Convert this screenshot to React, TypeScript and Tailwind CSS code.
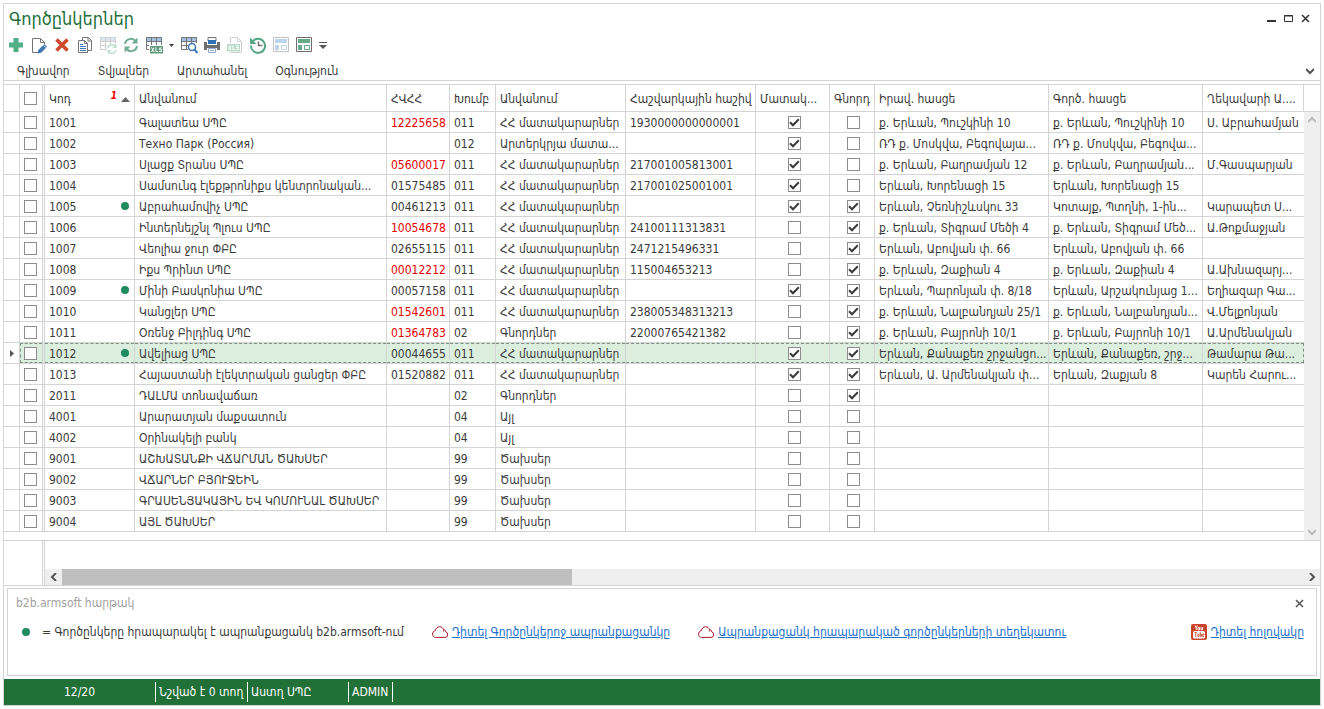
import { useState } from 'react';
import type { ReactNode } from 'react';

interface Partner {
  code: string;
  name: string;
  tin: string;
  group: string;
  groupName: string;
  account: string;
  supplier: boolean;
  buyer: boolean;
  legal: string;
  office: string;
  head: string;
  invalidTin?: boolean;
  published?: boolean;
}

const SUPPLIERS = 'ՀՀ մատակարարներ';
const BUYERS = 'Գնորդներ';
const OTHER = 'Այլ';
const COSTS = 'Ծախսեր';

const PARTNERS: Partner[] = [
  { code: '1001', name: 'Գալատեա ՍՊԸ', tin: '12225658', invalidTin: true, group: '011', groupName: SUPPLIERS, account: '1930000000000001', supplier: true, buyer: false, legal: 'ք. Երևան, Պուշկինի 10', office: 'ք. Երևան, Պուշկինի 10', head: 'Ս. Աբրահամյան' },
  { code: '1002', name: 'Техно Парк (Россия)', tin: '', group: '012', groupName: 'Արտերկրյա մատա...', account: '', supplier: true, buyer: false, legal: 'ՌԴ ք. Մոսկվա, Բեգովայա...', office: 'ՌԴ ք. Մոսկվա, Բեգովա...', head: '' },
  { code: '1003', name: 'Սլացք Տրանս ՍՊԸ', tin: '05600017', invalidTin: true, group: '011', groupName: SUPPLIERS, account: '217001005813001', supplier: true, buyer: false, legal: 'ք. Երևան, Բաղրամյան 12', office: 'ք. Երևան, Բաղրամյան...', head: 'Մ.Գասպարյան' },
  { code: '1004', name: 'Սամսունգ էլեքթրոնիքս կենտրոնական...', tin: '01575485', group: '011', groupName: SUPPLIERS, account: '217001025001001', supplier: true, buyer: false, legal: 'Երևան, Խորենացի 15', office: 'Երևան, Խորենացի 15', head: '' },
  { code: '1005', name: 'Աբրահամովիչ ՍՊԸ', published: true, tin: '00461213', group: '011', groupName: SUPPLIERS, account: '', supplier: true, buyer: true, legal: 'Երևան, Չեռնիշևսկու 33', office: 'Կոտայք, Պտղնի, 1-ին...', head: 'Կարապետ Ս...' },
  { code: '1006', name: 'Ինտերնեյշնլ Պլուս ՍՊԸ', tin: '10054678', invalidTin: true, group: '011', groupName: SUPPLIERS, account: '24100111313831', supplier: false, buyer: true, legal: 'ք. Երևան, Տիգրամ Մեծի 4', office: 'ք. Երևան, Տիգրամ Մեծ...', head: 'Ա.Թոքմաջյան' },
  { code: '1007', name: 'Վեոլիա ջուր ՓԲԸ', tin: '02655115', group: '011', groupName: SUPPLIERS, account: '2471215496331', supplier: false, buyer: true, legal: 'Երևան, Աբովյան փ. 66', office: 'Երևան, Աբովյան փ. 66', head: '' },
  { code: '1008', name: 'Իքս Պրինտ ՍՊԸ', tin: '00012212', invalidTin: true, group: '011', groupName: SUPPLIERS, account: '115004653213', supplier: false, buyer: true, legal: 'ք. Երևան, Զաքիան 4', office: 'ք. Երևան, Զաքիան 4', head: 'Ա.Ախնազարյ...' },
  { code: '1009', name: 'Մինի Բասկոնիա ՍՊԸ', published: true, tin: '00057158', group: '011', groupName: SUPPLIERS, account: '', supplier: true, buyer: true, legal: 'Երևան, Պարոնյան փ. 8/18', office: 'Երևան, Արշակունյաց 1...', head: 'Եղիազար Գա...' },
  { code: '1010', name: 'Կանցլեր ՍՊԸ', tin: '01542601', invalidTin: true, group: '011', groupName: SUPPLIERS, account: '238005348313213', supplier: false, buyer: true, legal: 'ք. Երևան, Նալբանդյան 25/1', office: 'ք. Երևան, Նալբանդյան...', head: 'Վ.Մելքոնյան' },
  { code: '1011', name: 'Օռենջ Բիլդինգ ՍՊԸ', tin: '01364783', invalidTin: true, group: '02', groupName: BUYERS, account: '22000765421382', supplier: false, buyer: true, legal: 'ք. Երևան, Բայրոնի 10/1', office: 'ք. Երևան, Բայրոնի 10/1', head: 'Ա.Արմենակյան' },
  { code: '1012', name: 'Ավելիաց ՍՊԸ', published: true, tin: '00044655', group: '011', groupName: SUPPLIERS, account: '', supplier: true, buyer: true, legal: 'Երևան, Քանաքեռ շրջանցո...', office: 'Երևան, Քանաքեռ, շրջ...', head: 'Թամարա Թա...' },
  { code: '1013', name: 'Հայաստանի էլեկտրական ցանցեր ՓԲԸ', tin: '01520882', group: '011', groupName: SUPPLIERS, account: '', supplier: true, buyer: true, legal: 'Երևան, Ա. Արմենակյան փ...', office: 'Երևան, Զաքյան 8', head: 'Կարեն Հարու...' },
  { code: '2011', name: 'ԴԱԼՄԱ տոնավաճառ', tin: '', group: '02', groupName: BUYERS, account: '', supplier: false, buyer: true, legal: '', office: '', head: '' },
  { code: '4001', name: 'Արարատյան մաքսատուն', tin: '', group: '04', groupName: OTHER, account: '', supplier: false, buyer: false, legal: '', office: '', head: '' },
  { code: '4002', name: 'Օրինակելի բանկ', tin: '', group: '04', groupName: OTHER, account: '', supplier: false, buyer: false, legal: '', office: '', head: '' },
  { code: '9001', name: 'ԱՇԽԱՏԱՆՔԻ ՎՃԱՐՄԱՆ ԾԱԽՍԵՐ', tin: '', group: '99', groupName: COSTS, account: '', supplier: false, buyer: false, legal: '', office: '', head: '' },
  { code: '9002', name: 'ՎՃԱՐՆԵՐ ԲՅՈՒՋԵԻՆ', tin: '', group: '99', groupName: COSTS, account: '', supplier: false, buyer: false, legal: '', office: '', head: '' },
  { code: '9003', name: 'ԳՐԱՍԵՆՅԱԿԱՅԻՆ ԵՎ ԿՈՄՈՒՆԱԼ ԾԱԽՍԵՐ', tin: '', group: '99', groupName: COSTS, account: '', supplier: false, buyer: false, legal: '', office: '', head: '' },
  { code: '9004', name: 'ԱՅԼ ԾԱԽՍԵՐ', tin: '', group: '99', groupName: COSTS, account: '', supplier: false, buyer: false, legal: '', office: '', head: '' },
];

const MENU = ['Գլխավոր', 'Տվյալներ', 'Արտահանել', 'Օգնություն'];

function Icon({ children }: { children: ReactNode }) {
  return (
    <svg width="18" height="18" viewBox="0 0 18 18" fill="none" aria-hidden="true">
      {children}
    </svg>
  );
}

function TableGlyph({ line, head }: { line: string; head: string }) {
  return (
    <>
      <path d="M1 1h16v4H1z" fill={head} />
      <path d="M1.500 1.500h15v12h-15zM1 5.500h16M1 9.500h16M6.500 1v12M11.500 1v12" stroke={line} />
    </>
  );
}

function XlsBadge({ color }: { color: string }) {
  return (
    <>
      <path d="M4 9h14v9H4z" fill="#fff" />
      <path d="M5 10h13v7.500H5z" fill={color} />
      <path d="M6.500 11.500l2.500 4.500M9 11.500L6.500 16M10.900 11.500v4h2M16.700 12h-2v1.700h1.800v1.800h-2.200" stroke="#fff" />
    </>
  );
}

const RefreshPaths = ({ color }: { color: string }) => (
  <>
    <path d="M3 8a6 6 0 0 1 10.500-3M15 10a6 6 0 0 1-10.500 3" stroke={color} strokeWidth="2" />
    <path d="M15.500 1.500v6h-6zM2.500 16.500v-6h6z" fill={color} />
  </>
);

const TOOLS: { label: string; icon: ReactNode; menu?: boolean }[] = [
  { label: 'Ավելացնել', icon: <path d="M6.500 2h5v4.500H16v5h-4.500V16h-5v-4.500H2v-5h4.500z" fill="#50ae86" /> },
  {
    label: 'Խմբագրել',
    icon: (
      <>
        <path d="M8 16.500H2.500v-14h8l4 4v2M10.500 2.500v4h4" stroke="#757575" />
        <path d="M7.500 17.500l.8-3.500 6-6 2.800 2.800-6 6z" fill="#3f76b5" />
        <path d="M13 8.800l3 3" stroke="#fff" strokeWidth=".8" />
      </>
    ),
  },
  { label: 'Ջնջել', icon: <path d="M3.500 3.500l11 11M14.500 3.500l-11 11" stroke="#d04a2e" strokeWidth="3.600" /> },
  {
    label: 'Պատճենել',
    icon: (
      <>
        <path d="M6.500 4V1.500h6l3 3v10H12M12 1.500V5h3.500" stroke="#757575" />
        <path d="M2.500 4.500h6l3 3v9h-9zM8.500 4.500v3h3" fill="#fff" stroke="#757575" />
        <path d="M4 8.500h3M4 10.500h6M4 12.500h6M4 14.500h6" stroke="#3f76b5" />
      </>
    ),
  },
  {
    label: 'Թարմացնել աղյուսակը',
    icon: (
      <>
        <TableGlyph line="#d0d0d0" head="#dbe6f1" />
        <path d="M8 8h10v10H8z" fill="#fff" />
        <path d="M9 12a4 4 0 0 1 7-2M17 14a4 4 0 0 1-7 2.200" stroke="#b9dfce" strokeWidth="1.500" />
        <path d="M17.500 8v4h-4zM8.500 18v-4h4z" fill="#b9dfce" />
      </>
    ),
  },
  { label: 'Թարմացնել', icon: <RefreshPaths color="#6fae93" /> },
  { label: 'Արտահանել XLS', menu: true, icon: <><TableGlyph line="#757575" head="#a3bfdf" /><XlsBadge color="#639a7e" /></> },
  {
    label: 'Դիտել',
    icon: (
      <>
        <TableGlyph line="#757575" head="#a3bfdf" />
        <path d="M8 7h10v10H8z" fill="#fff" />
        <circle cx="12" cy="11" r="3.500" stroke="#3f76b5" strokeWidth="1.500" />
        <path d="M14.500 13.500l3 3.500" stroke="#3f76b5" strokeWidth="2" />
      </>
    ),
  },
  {
    label: 'Տպել',
    icon: (
      <>
        <path d="M5 5V1.500h8V5" stroke="#757575" />
        <path d="M5 4h8v4H5z" fill="#2f6eb5" />
        <path d="M1 6h3v3h10V6h3v8h-3v-2H4v2H1z" fill="#6d6d6d" />
        <path d="M5.500 12.500h7v4h-7z" fill="#fff" stroke="#8aa9cc" />
        <path d="M7 14.500h4" stroke="#8aa9cc" />
      </>
    ),
  },
  {
    label: 'XLS ֆայլ',
    icon: (
      <>
        <path d="M4.500 8V1.500h7l4 4v11h-11M11.500 1.500v4h4" stroke="#d0d0d0" />
        <g transform="translate(-4 -2)"><XlsBadge color="#bcdccb" /></g>
      </>
    ),
  },
  {
    label: 'Պատմություն',
    icon: (
      <>
        <path d="M3.500 5.500a7 7 0 1 1-1.500 4" stroke="#55a785" strokeWidth="2" />
        <path d="M1 1.500v6.500h6.500z" fill="#55a785" />
        <path d="M9.500 5.500v4h4" stroke="#757575" strokeWidth="1.500" />
      </>
    ),
  },
  {
    label: 'Դասավորություն',
    icon: (
      <>
        <path d="M1.500 1.500h15v14h-15z" stroke="#c4c4c4" />
        <path d="M3 3h12v4H3zM3 9h4v5H3z" fill="#bcd5ef" />
        <path d="M9.500 9.500h5v4h-5z" stroke="#bcd5ef" />
      </>
    ),
  },
  {
    label: 'Վահանակ',
    icon: (
      <>
        <path d="M1.500 1.500h15v14h-15z" stroke="#6d6d6d" />
        <path d="M3 3h12v4H3zM3 9h4v5H3z" fill="#68a98a" />
        <path d="M9.500 9.500h5v4h-5z" stroke="#68a98a" />
      </>
    ),
  },
];

function Check({ label, defaultChecked = false }: { label: string; defaultChecked?: boolean }) {
  return (
    <span className="inline-grid size-[13px] shrink-0">
      <input
        type="checkbox"
        aria-label={label}
        defaultChecked={defaultChecked}
        className="peer size-[13px] appearance-none border border-[#8c8c8c] bg-white [grid-area:1/1]"
      />
      <svg
        viewBox="0 0 13 13"
        fill="none"
        aria-hidden="true"
        className="pointer-events-none invisible size-[13px] peer-checked:visible [grid-area:1/1]"
      >
        <path d="M2 6.200l3 3 5.800-6" stroke="#3a3a3a" strokeWidth="2" />
      </svg>
    </span>
  );
}

function Dot() {
  return <span className="size-2 shrink-0 rounded-full bg-[#1f8c5f]" />;
}

function Cloud() {
  return (
    <svg width="16" height="12" viewBox="0 0 16 12" fill="none" stroke="#a8122a" aria-hidden="true">
      <path d="M3.500 11.400h9.300a2.800 2.800 0 0 0 .9-5.500c0-1.400-.9-2.300-2.200-2.200C10.900 1.700 9.300.6 7.600.7 5.600.8 3.700 2.200 3.300 4.700 1.600 5 .6 6.400.6 8.100c0 1.900 1.200 3.300 2.900 3.300zM11.500 3.700c.2.600.2 1.100 0 1.800" />
    </svg>
  );
}

function YouTube() {
  return (
    <svg width="16" height="16" viewBox="0 0 16 16" aria-hidden="true">
      <rect width="16" height="16" rx="2" fill="#c8442e" />
      <path d="M4 1.500l1.200 2.300L6.300 1.500M5.200 3.800V6M7 3.500h1.500V6H7zM10 3v2.800h1.500V3" fill="none" stroke="#fff" strokeWidth=".9" />
      <rect x="2" y="7" width="12" height="7.500" rx="1.500" fill="#fff" />
      <path d="M3.500 8.500h2.500M4.700 8.500V13M6.800 9.500v3h1.200v-3M9.300 8v4.500h1.200V10H9.300M13 11h-1.300v1.500H13M11.700 11v-1H13v1" fill="none" stroke="#c8442e" strokeWidth=".8" />
    </svg>
  );
}

function Chevron({ d }: { d: string }) {
  return (
    <svg width="8" height="8" viewBox="0 0 8 8" fill="none" stroke="currentColor" strokeWidth="2" aria-hidden="true">
      <path d={d} />
    </svg>
  );
}

function Th({ children, className = 'border-r pt-0.5' }: { children?: ReactNode; className?: string }) {
  return (
    <th className={`overflow-hidden whitespace-nowrap border-b border-[#d4d4d4] px-1 text-left font-normal ${className}`}>
      {children}
    </th>
  );
}

// The dashed focus frame is drawn inside each cell of the selected row.
function Td({ children, selected, className = 'border-r', inner = 'px-1 pt-0.5' }: { children?: ReactNode; selected: boolean; className?: string; inner?: string }) {
  return (
    <td className={`border-b border-[#d4d4d4] p-0 ${selected ? 'bg-[#dcefdf]' : ''} ${className}`}>
      <div className={`flex h-5 items-center overflow-hidden whitespace-nowrap ${selected ? 'border-y border-dashed border-[#7d8f80]' : ''} ${inner}`}>
        {children}
      </div>
    </td>
  );
}

export default function App() {
  const [selected, setSelected] = useState('1012');

  return (
    <div className="flex min-h-screen flex-col bg-white p-[3px] font-['DejaVu_Sans_Condensed','DejaVu_Sans',sans-serif] text-[12px] leading-4 text-[#3b3b3b]">
      <div className="flex flex-1 flex-col border border-[#d4d4d4]">
        {/* Title bar */}
        <header className="flex h-7 items-center justify-between pl-[5px] pr-[10px]">
          <h1 className="pt-0.5 text-[18px] leading-6 text-[#217038]">Գործընկերներ</h1>
          <div className="flex items-center gap-2 text-[#333]">
            <button type="button" aria-label="Փոքրացնել">
              <svg width="9" height="9" viewBox="0 0 9 9" aria-hidden="true"><path d="M0 6h9v2H0z" fill="currentColor" /></svg>
            </button>
            <button type="button" aria-label="Մեծացնել">
              <svg width="9" height="9" viewBox="0 0 9 9" fill="none" stroke="currentColor" aria-hidden="true"><path d="M.5 1.500h8v6h-8zM0 2h9" /></svg>
            </button>
            <button type="button" aria-label="Փակել">
              <svg width="9" height="9" viewBox="0 0 9 9" stroke="currentColor" strokeWidth="1.500" aria-hidden="true"><path d="M1 1l7 7M8 1L1 8" /></svg>
            </button>
          </div>
        </header>

        {/* Toolbar */}
        <div className="flex h-[26px] items-center">
          {TOOLS.map(tool => (
            <div key={tool.label} className="flex items-center">
              <button type="button" title={tool.label} aria-label={tool.label} className="flex w-[23px] justify-center">
                <Icon>{tool.icon}</Icon>
              </button>
              {tool.menu && (
                <button type="button" aria-label="Ավելին" className="flex w-3 justify-center">
                  <svg width="5" height="3" viewBox="0 0 5 3" aria-hidden="true"><path d="M0 0h5L2.500 3z" fill="#444" /></svg>
                </button>
              )}
            </div>
          ))}
          <button type="button" aria-label="Կարգավորել" className="ml-1">
            <svg width="8" height="7" viewBox="0 0 8 7" aria-hidden="true"><path d="M0 0h8v1H0zM0 3h8L4 7z" fill="#555" /></svg>
          </button>
        </div>

        {/* Menu */}
        <nav className="flex h-[23px] items-center justify-between border-b border-[#d4d4d4] pl-[13px] pr-[6px] pt-1">
          <div className="flex gap-7">
            {MENU.map(item => (
              <button key={item} type="button">{item}</button>
            ))}
          </div>
          <button type="button" aria-label="Ծալել" className="text-[#555]">
            <Chevron d="M0 2l4 4 4-4" />
          </button>
        </nav>

        {/* Partner list */}
        <main className="mt-[3px] flex flex-1 border-y border-[#d4d4d4]">
          <div className="min-w-0 flex-1">
            <table className="w-full table-fixed border-separate border-spacing-0">
              <colgroup>
                <col className="w-4" />
                <col className="w-[25px]" />
                <col className="w-[90px]" />
                <col className="w-[252px]" />
                <col className="w-[63px]" />
                <col className="w-[46px]" />
                <col className="w-[130px]" />
                <col className="w-[130px]" />
                <col className="w-[74px]" />
                <col className="w-[45px]" />
                <col className="w-[174px]" />
                <col className="w-[154px]" />
                <col />
              </colgroup>
              <thead>
                <tr className="h-[27px]">
                  <Th />
                  <Th className="border-r-[3px] border-r-[#d4d4d4] [border-right-style:double]">
                    <span className="flex"><Check label="Նշել բոլորը" /></span>
                  </Th>
                  <Th>
                    <span className="flex items-center">
                      <span className="flex-1">Կոդ</span>
                      <span className="mr-1 self-start text-[10px] font-bold italic leading-[10px] text-[#f00000]">1</span>
                      <svg width="9" height="5" viewBox="0 0 9 5" aria-hidden="true"><path d="M4.500 0L9 5H0z" fill="#666" /></svg>
                    </span>
                  </Th>
                  <Th>Անվանում</Th>
                  <Th>ՀՎՀՀ</Th>
                  <Th>Խումբ</Th>
                  <Th>Անվանում</Th>
                  <Th>Հաշվարկային հաշիվ</Th>
                  <Th>Մատակ...</Th>
                  <Th>Գնորդ</Th>
                  <Th>Իրավ. հասցե</Th>
                  <Th>Գործ. հասցե</Th>
                  <Th>Ղեկավարի Ա....</Th>
                </tr>
              </thead>
              <tbody>
                {PARTNERS.map(p => {
                  const sel = p.code === selected;
                  return (
                    <tr key={p.code} onClick={() => setSelected(p.code)}>
                      <Td selected={false} inner="pl-[6px]">
                        {sel && <svg width="4" height="7" viewBox="0 0 4 7" aria-hidden="true"><path d="M0 0l4 3.500L0 7z" fill="#555" /></svg>}
                      </Td>
                      <Td
                        selected={sel}
                        className="border-r-[3px] border-r-[#d4d4d4] [border-right-style:double]"
                        inner={sel ? 'border-l pl-[3px]' : 'pl-1'}
                      >
                        <Check label={p.code} />
                      </Td>
                      <Td selected={sel} inner="justify-between pl-1 pr-[5px]">
                        <span className="pt-0.5">{p.code}</span>
                        {p.published && <Dot />}
                      </Td>
                      <Td selected={sel}>{p.name}</Td>
                      <Td selected={sel} inner={p.invalidTin ? 'px-1 pt-0.5 text-[#e60000]' : 'px-1 pt-0.5'}>{p.tin}</Td>
                      <Td selected={sel}>{p.group}</Td>
                      <Td selected={sel}>{p.groupName}</Td>
                      <Td selected={sel}>{p.account}</Td>
                      <Td selected={sel} inner="justify-center pl-1">
                        <Check label={`Մատակարար ${p.code}`} defaultChecked={p.supplier} />
                      </Td>
                      <Td selected={sel} inner="justify-center pl-[3px]">
                        <Check label={`Գնորդ ${p.code}`} defaultChecked={p.buyer} />
                      </Td>
                      <Td selected={sel}>{p.legal}</Td>
                      <Td selected={sel}>{p.office}</Td>
                      <Td selected={sel} className="" inner={sel ? 'border-r pl-1 pt-0.5' : 'pl-1 pt-0.5'}>{p.head}</Td>
                    </tr>
                  );
                })}
              </tbody>
            </table>
          </div>
          <div className="flex w-4 flex-col">
            <div className="h-[27px] border-b border-[#d4d4d4]" />
            <div className="flex flex-1 flex-col items-center justify-between bg-[#efefef] py-1 text-[#bcbcbc]">
              <Chevron d="M0 6l4-4 4 4" />
              <Chevron d="M0 2l4 4 4-4" />
            </div>
          </div>
        </main>

        {/* Footer strip with the horizontal scroll bar */}
        <div className="flex h-[45px] border-b border-[#d4d4d4]">
          <div className="w-[41px] border-r-[3px] border-[#d4d4d4] [border-right-style:double]" />
          <div className="flex flex-1 flex-col justify-end">
            <div className="flex h-4 items-center bg-[#efefef] text-[#555]">
              <span className="flex w-[17px] justify-center"><Chevron d="M6 0L2 4l4 4" /></span>
              <span className="h-4 w-2/5 bg-[#bfbfbf]" />
              <span className="ml-auto flex w-[17px] justify-center"><Chevron d="M2 0l4 4-4 4" /></span>
            </div>
          </div>
        </div>

        {/* b2b panel */}
        <section className="mx-[3px] mb-[3px] mt-[2px] h-[88px] border border-[#d4d4d4] px-2">
          <div className="flex h-[28px] items-center justify-between pr-1 text-[#a0a0a0]">
            <h2>b2b.armsoft հարթակ</h2>
            <button type="button" aria-label="Փակել վահանակը" className="text-[#555]">
              <svg width="9" height="9" viewBox="0 0 9 9" stroke="currentColor" strokeWidth="1.500" aria-hidden="true"><path d="M1 1l7 7M8 1L1 8" /></svg>
            </button>
          </div>
          <div className="flex h-[30px] items-center whitespace-nowrap pl-[6px] pr-1">
            <Dot />
            <span className="ml-3">= Գործընկերը հրապարակել է ապրանքացանկ b2b.armsoft-ում</span>
            <a href="#catalog" className="ml-7 flex items-center gap-1 text-[#1a6fca]">
              <Cloud />
              <span className="underline">Դիտել Գործընկերոջ ապրանքացանկը</span>
            </a>
            <a href="#directory" className="ml-7 flex items-center gap-1 text-[#1a6fca]">
              <Cloud />
              <span className="underline">Ապրանքացանկ հրապարակած գործընկերների տեղեկատու</span>
            </a>
            <a href="#video" className="ml-auto flex items-center gap-1 text-[#1a6fca]">
              <YouTube />
              <span className="underline">Դիտել հոլովակը</span>
            </a>
          </div>
        </section>

        {/* Status bar */}
        <footer className="flex h-[26px] items-center whitespace-nowrap bg-[#217038] leading-5 text-white">
          <span className="w-[152px] border-r border-white text-center">12/20</span>
          <span className="w-[92px] border-r border-white pl-[3px]">Նշված է 0 տող</span>
          <span className="w-[101px] border-r border-white pl-[3px]">Աստղ ՍՊԸ</span>
          <span className="w-11 border-r border-white pl-[3px]">ADMIN</span>
        </footer>
      </div>
    </div>
  );
}
